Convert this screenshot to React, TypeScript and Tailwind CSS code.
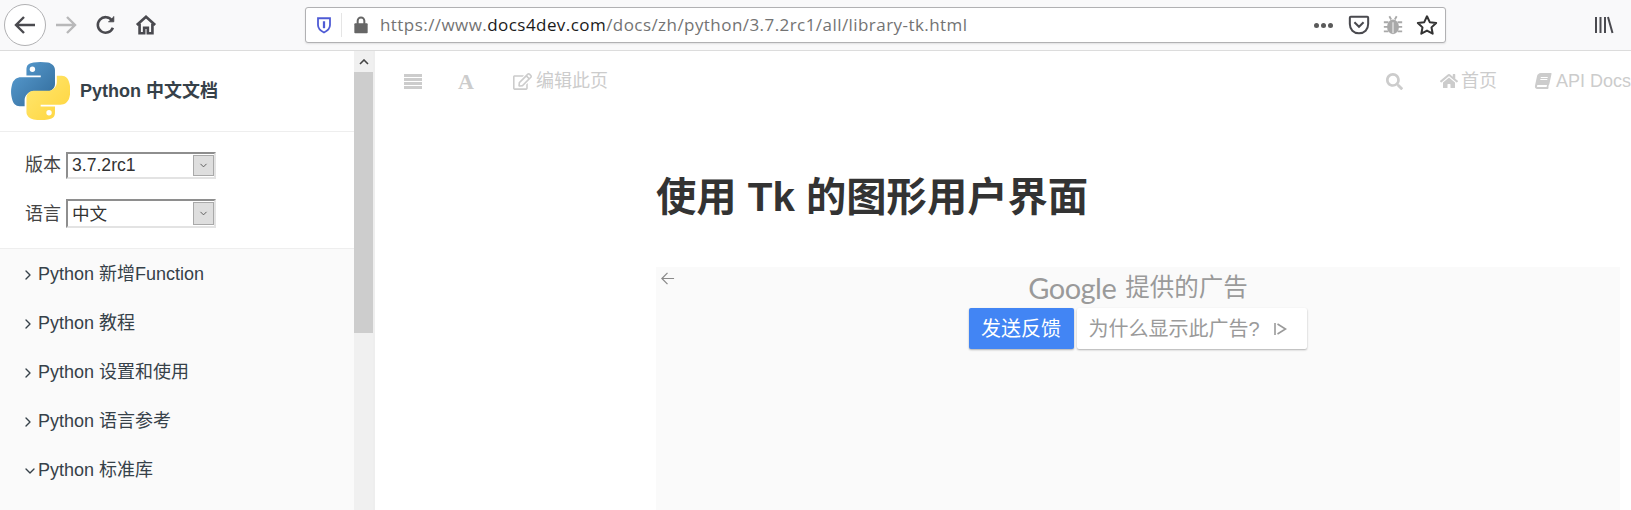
import React from "react";
import {FaRegEdit, FaSearch, FaHome, FaBook} from "react-icons/fa";
import {FiChevronDown, FiChevronRight} from "react-icons/fi";

const SANS = "font-['Liberation_Sans','Noto_Sans_CJK_SC',sans-serif]";

function PythonLogo() {
    const snake = "M54.9 .9c-4.6 0-9 .4-12.8 1.1C30.8 4 28.8 8.2 28.8 15.9v10.2h26.7v3.4H18.7c-7.8 0-14.6 4.7-16.7 13.5-2.5 10.2-2.6 16.5 0 27.1 1.9 7.9 6.4 13.5 14.2 13.5h9.2V71.9c0-8.8 7.7-16.6 16.7-16.6h26.6c7.4 0 13.3-6.1 13.3-13.5V15.9c0-7.2-6.1-12.6-13.3-13.9C64.2 1.3 59.5 .9 54.9 .9z";
    return (
        <svg viewBox="0 0 110 110" className="w-[59px] h-[60px] shrink-0">
            <defs>
                <linearGradient id="pyBlue" x1="0" y1="0" x2="1" y2="1">
                    <stop offset="0" stopColor="#5a9fd4"/>
                    <stop offset="1" stopColor="#306998"/>
                </linearGradient>
                <linearGradient id="pyYellow" x1="0" y1="0" x2="1" y2="1">
                    <stop offset="0" stopColor="#ffd43b"/>
                    <stop offset="1" stopColor="#ffe873"/>
                </linearGradient>
            </defs>
            <path d={snake} fill="url(#pyBlue)"/>
            <circle cx="39.9" cy="14.5" r="5" fill="#fff"/>
            <g transform="rotate(180 55.4 55)">
                <path d={snake} fill="url(#pyYellow)"/>
                <circle cx="39.9" cy="14.5" r="5" fill="#fff"/>
            </g>
        </svg>
    );
}

function Toolbar() {
    return (
        <div className="h-[51px] shrink-0 flex items-center bg-[#f9f9fa] border-b border-[#dcdcdc]">
            <div className="ml-[4px] w-[42px] h-[42px] rounded-full border border-[#b1b1b3] bg-white flex items-center justify-center">
                <svg viewBox="0 0 24 24" className="w-[24px] h-[24px]" fill="none" stroke="#4a4a4f" strokeWidth="2.4">
                    <path d="M22 12H3M11 4l-8 8 8 8"/>
                </svg>
            </div>
            <svg viewBox="0 0 24 24" className="ml-[8px] w-[24px] h-[24px]" fill="none" stroke="#b8b8b9" strokeWidth="2.4">
                <path d="M2 12h19M13 4l8 8-8 8"/>
            </svg>
            <svg viewBox="0 0 24 24" className="ml-[17px] w-[22px] h-[22px]" fill="none" stroke="#4a4a4f" strokeWidth="2.8">
                <path d="M19.5 15a8.5 8.5 0 1 1-1-8"/>
                <path d="M20.5 2.5v6h-6" fill="#4a4a4f" strokeWidth="1"/>
            </svg>
            <svg viewBox="0 0 24 24" className="ml-[18px] w-[22px] h-[22px]" fill="none" stroke="#4a4a4f" strokeWidth="2.9">
                <path d="M2 12l10-9 10 9M5 10.5V21h5v-6h4v6h5V10.5"/>
            </svg>
            <div className="ml-[148px] w-[1141px] h-[36px] flex items-center bg-white border border-[#b1b1b3] rounded-[3px] shadow-[0_1px_2px_rgba(0,0,0,0.1)]">
                <svg viewBox="0 0 24 24" className="ml-[9px] w-[18px] h-[18px]">
                    <path d="M4 3h16v9c0 5-4 8-8 10-4-2-8-5-8-10z" fill="none" stroke="#4f5bd5" strokeWidth="2.4"/>
                    <path d="M10.5 7h3v8l-1.5 2-1.5-2z" fill="#4f5bd5"/>
                </svg>
                <div className="ml-[8px] w-px h-[24px] bg-[#e5e5e5]"/>
                <svg viewBox="0 0 24 24" className="ml-[9px] w-[20px] h-[20px]" fill="#666">
                    <path d="M5 10h14a1 1 0 0 1 1 1v10a1 1 0 0 1-1 1H5a1 1 0 0 1-1-1V11a1 1 0 0 1 1-1z"/>
                    <path d="M8 11V7a4 4 0 0 1 8 0v4" fill="none" stroke="#666" strokeWidth="2.4"/>
                </svg>
                <span className="ml-[9px] text-[17px] tracking-[0.44px] font-['Open_Sans',sans-serif] text-[#737373] whitespace-nowrap">
                    https://www.<span className="text-[#1a1a1a]">docs4dev.com</span>/docs/zh/python/3.7.2rc1/all/library-tk.html
                </span>
                <div className="ml-auto flex items-center">
                    <div className="flex gap-[2px]">
                        <span className="w-[5px] h-[5px] rounded-full bg-[#5a5a5a]"/>
                        <span className="w-[5px] h-[5px] rounded-full bg-[#5a5a5a]"/>
                        <span className="w-[5px] h-[5px] rounded-full bg-[#5a5a5a]"/>
                    </div>
                    <svg viewBox="0 0 24 24" className="ml-[15px] w-[22px] h-[22px]" fill="none" stroke="#4a4a4f" strokeWidth="2.2">
                        <path d="M3 3h18a1 1 0 0 1 1 1v7c0 6-4 10-10 10S2 17 2 11V4a1 1 0 0 1 1-1z"/>
                        <path d="M7 9l5 5 5-5"/>
                    </svg>
                    <svg viewBox="0 0 24 24" className="ml-[12px] w-[22px] h-[22px]" fill="#a9a9a9" stroke="#a9a9a9" strokeWidth="2">
                        <ellipse cx="12" cy="14" rx="6.5" ry="8" stroke="none"/>
                        <path d="M8 2.5l2 3.5M16 2.5L14 6M2 9h5M22 9h-5M2 14h5M22 14h-5M2 19h5M22 19h-5"/>
                        <path d="M12 9v12" stroke="#fff" strokeWidth="1"/>
                    </svg>
                    <svg viewBox="0 0 24 24" className="ml-[12px] mr-[7px] w-[22px] h-[22px]" fill="none" stroke="#333" strokeWidth="2.2" strokeLinejoin="round">
                        <path d="M12 2.5l3 6.4 7 .9-5.1 4.8 1.3 6.9-6.2-3.4-6.2 3.4 1.3-6.9L2 9.8l7-.9z"/>
                    </svg>
                </div>
            </div>
            <svg viewBox="0 0 20 20" className="ml-[148px] w-[20px] h-[20px]" fill="none" stroke="#4a4a4f" strokeWidth="2">
                <path d="M2 2v16M6.5 2v16M11 2v16M14 2l4.5 16"/>
            </svg>
        </div>
    );
}

function SelectRow({label, value, boxClass, textClass}: {label: string; value: string; boxClass: string; textClass?: string}) {
    return (
        <div className="flex items-center">
            <span className={`w-[41px] text-[18px] text-[#444] whitespace-nowrap ${textClass ?? ""}`}>{label}</span>
            <div className={`w-[150px] flex items-stretch border-2 border-t-[#8e8e8e] border-l-[#8e8e8e] border-r-[#e3e3e3] border-b-[#e3e3e3] bg-white ${boxClass}`}>
                <span className={`flex-1 flex items-center pl-[4px] text-[17.6px] text-[#333] ${textClass ?? ""}`}>{value}</span>
                <span className="w-[21px] my-px flex items-center justify-center bg-[#dedede] border border-[#a9a9a9]">
                    <FiChevronDown className="w-[11px] h-[11px] text-[#555]"/>
                </span>
            </div>
        </div>
    );
}

function NavItem({label, open}: {label: string; open?: boolean}) {
    return (
        <div className="h-[49px] flex items-center pt-[2px] pl-[20px] text-[18px] text-[#364149] whitespace-nowrap">
            {open
                ? <FiChevronDown className="w-[16px] h-[16px] ml-[2px] shrink-0"/>
                : <FiChevronRight className="w-[16px] h-[16px] mr-[2px] shrink-0"/>}
            <span>{label}</span>
        </div>
    );
}

function Sidebar() {
    return (
        <aside className="w-[375px] shrink-0 flex border-r-2 border-[#eeeeee]">
            <div className="w-[354px] flex flex-col bg-white">
                <div className="h-[81px] shrink-0 flex items-center pl-[11px] border-b border-[#eeeeee]">
                    <PythonLogo/>
                    <span className="ml-[10px] text-[18px] font-bold text-[#364149]">Python 中文文档</span>
                </div>
                <div className="h-[117px] shrink-0 flex flex-col pl-[25px] pt-[20px] gap-[20px] border-b border-[#eeeeee]">
                    <SelectRow label="版本" value="3.7.2rc1" boxClass="h-[27px]"/>
                    <SelectRow label="语言" value="中文" boxClass="h-[29px]" textClass="pt-[2px]"/>
                </div>
                <nav className="flex-1 bg-[#fafafa]">
                    <NavItem label="Python 新增Function"/>
                    <NavItem label="Python 教程"/>
                    <NavItem label="Python 设置和使用"/>
                    <NavItem label="Python 语言参考"/>
                    <NavItem label="Python 标准库" open/>
                </nav>
            </div>
            <div className="w-[19px] flex flex-col bg-[#f0f0f0]">
                <div className="h-[21px] flex items-center justify-center">
                    <svg viewBox="0 0 10 6" className="w-[10px] h-[6px]" fill="none" stroke="#444" strokeWidth="1.6">
                        <path d="M1 5l4-4 4 4"/>
                    </svg>
                </div>
                <div className="h-[261px] bg-[#cdcdcd]"/>
            </div>
        </aside>
    );
}

function TopNav() {
    return (
        <div className="h-[60px] shrink-0 flex items-center text-[18px] text-[#cccccc] whitespace-nowrap pl-[29px]">
            <svg viewBox="0 0 18 15" className="w-[18px] h-[15px]" fill="#cccccc">
                <rect y="0" width="18" height="3"/>
                <rect y="4" width="18" height="3"/>
                <rect y="8" width="18" height="3"/>
                <rect y="12" width="18" height="3"/>
            </svg>
            <span className="ml-[36px] w-[19px] text-[22px] font-bold font-['Liberation_Serif',serif]">A</span>
            <FaRegEdit className="ml-[36px] w-[19px] h-[19px]"/>
            <span className="ml-[4px]">编辑此页</span>
            <div className="ml-auto flex items-center">
                <FaSearch className="w-[17px] h-[17px]"/>
                <FaHome className="ml-[37px] w-[18px] h-[18px]"/>
                <span className="ml-[3px]">首页</span>
                <FaBook className="ml-[38px] w-[16px] h-[16px] -skew-x-12"/>
                <span className="ml-[5px]">API Docs</span>
            </div>
        </div>
    );
}

function AdFeedback() {
    return (
        <div className="mt-[41px] mr-[11px] h-[243px] bg-[#fafafa] relative flex flex-col items-center pt-[6px]">
            <svg viewBox="0 0 16 16" className="absolute left-[4px] top-[4px] w-[15px] h-[15px]" fill="none" stroke="#8a8a8a" strokeWidth="1.3">
                <path d="M15 8H2M8 2L2 8l6 6"/>
            </svg>
            <div className="flex items-center text-[24.5px] leading-[30px] text-[#9a9a9a]">
                <span className="font-['Lato',sans-serif] text-[29px] tracking-[-0.5px]">Google</span>
                <span className="ml-[9px]">提供的广告</span>
            </div>
            <div className="mt-[5px] -ml-[1px] flex gap-[3px] text-[20px]">
                <div className="w-[105px] h-[41px] flex items-center justify-center rounded-[2px] bg-[#4285f4] text-white shadow-[0_1px_2px_rgba(0,0,0,0.3)]">发送反馈</div>
                <div className="w-[230px] h-[41px] flex items-center pl-[12px] rounded-[2px] bg-white text-[#9a9a9a] shadow-[0_1px_2px_rgba(0,0,0,0.3)]">
                    为什么显示此广告?
                    <svg viewBox="0 0 16 16" className="ml-[12px] w-[16px] h-[16px]" fill="none" stroke="#9a9a9a" strokeWidth="1.6">
                        <path d="M3 2v12M5.5 3l8 5-8 5"/>
                    </svg>
                </div>
            </div>
        </div>
    );
}

export default function App() {
    return (
        <div className={`w-[1631px] h-[510px] flex flex-col overflow-hidden bg-white ${SANS}`}>
            <Toolbar/>
            <div className="flex-1 flex min-h-0">
                <Sidebar/>
                <main className="flex-1 min-w-0 flex flex-col overflow-hidden">
                    <TopNav/>
                    <div className="pl-[281px]">
                        <h1 className="mt-[59px] text-[40.3px] leading-[56px] font-bold text-[#333333] whitespace-nowrap">使用 Tk 的图形用户界面</h1>
                        <AdFeedback/>
                    </div>
                </main>
            </div>
        </div>
    );
}
